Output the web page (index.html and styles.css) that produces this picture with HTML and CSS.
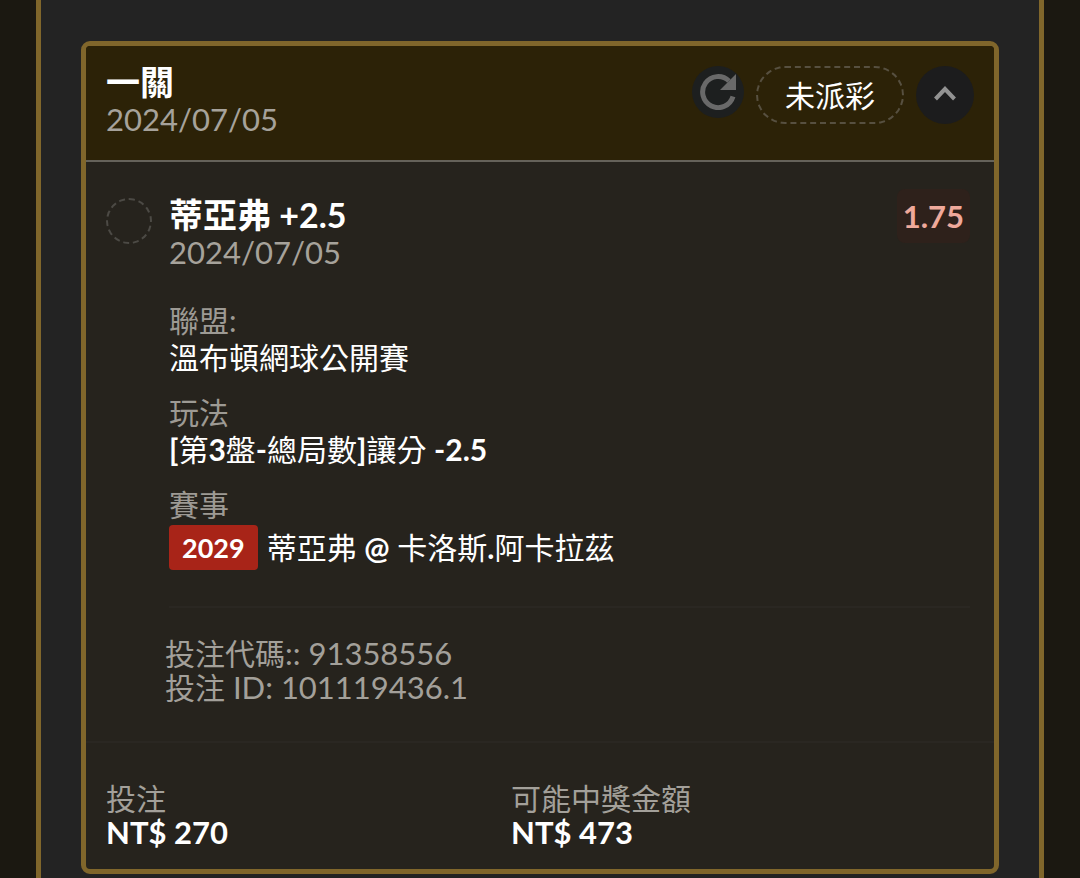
FILE: index.html
```html
<!DOCTYPE html>
<html lang="zh-Hant">
<head>
<meta charset="utf-8">
<meta name="viewport" content="width=device-width, initial-scale=1">
<title>一關</title>
<link rel="stylesheet" href="styles.css">
</head>
<body>
<main class="panel">
  <article class="card">
    <header class="card-head">
      <div class="card-heading">
        <h1 class="card-title">一關</h1>
        <time class="date" datetime="2024-07-05">2024/07/05</time>
      </div>
      <div class="actions">
        <button class="refresh" type="button" aria-label="重新整理">
          <svg class="refresh-icon" viewBox="0 0 36 36" aria-hidden="true">
            <path d="M33 22.500A15.500 15.500 0 1 1 29 7" fill="none" stroke="#696969" stroke-width="5"/>
            <path d="M36 0V16H20Z" fill="#696969"/>
          </svg>
        </button>
        <span class="status">未派彩</span>
        <button class="toggle" type="button" aria-label="收合">
          <svg class="toggle-icon" viewBox="0 0 22 15" aria-hidden="true">
            <path d="M1.5 13L11 3L20.5 13" fill="none" stroke="#929292" stroke-width="4"/>
          </svg>
        </button>
      </div>
    </header>

    <section class="bet">
      <span class="marker"></span>
      <div class="bet-body">
        <div class="bet-top">
          <div class="bet-heading">
            <h2 class="bet-title">蒂亞弗 +2.5</h2>
            <time class="date" datetime="2024-07-05">2024/07/05</time>
          </div>
          <strong class="odds">1.75</strong>
        </div>
        <dl class="details">
          <div>
            <dt>聯盟:</dt>
            <dd>溫布頓網球公開賽</dd>
          </div>
          <div>
            <dt>玩法</dt>
            <dd><b>[</b>第<b>3</b>盤<b>-</b>總局數<b>]</b>讓分 <b>-2.5</b></dd>
          </div>
          <div>
            <dt>賽事</dt>
            <dd class="match"><span class="badge">2029</span><span>蒂亞弗 <b>@</b> 卡洛斯<b>.</b>阿卡拉茲</span></dd>
          </div>
        </dl>
        <div class="codes">
          <p>投注代碼<span class="num">:: 91358556</span></p>
          <p>投注<span class="num"> ID: 101119436.1</span></p>
        </div>
      </div>
    </section>

    <footer class="totals">
      <div>
        <p>投注</p>
        <strong class="amount">NT$ 270</strong>
      </div>
      <div>
        <p>可能中獎金額</p>
        <strong class="amount">NT$ 473</strong>
      </div>
    </footer>
  </article>
</main>
</body>
</html>
```
FILE: styles.css
```css
* {
  box-sizing: border-box;
}

body,
h1,
h2,
p,
dl,
dd {
  margin: 0;
}

body {
  background: #1b1811;
  color: #fff;
  font: 30px/34px Lato, "Noto Sans CJK TC", sans-serif;
}

.panel {
  min-height: 100vh;
  margin: 0 36px;
  padding: 41px 40px 3px;
  border: solid #80662b;
  border-width: 0 5px;
  background: #232323;
}

.card {
  overflow: hidden;
  border: 5px solid #80662b;
  border-radius: 9px;
  background: #26231d;
}

.card-head {
  display: flex;
  justify-content: space-between;
  align-items: flex-start;
  padding: 17px 20px 23px;
  border-bottom: 2px solid #65625a;
  background: #2c2207;
}

.card-title,
.bet-title {
  font-size: 34px;
  font-weight: 700;
  line-height: 38px;
}

.date {
  display: block;
  font-size: 31px;
  line-height: 36px;
  color: #a6a29b;
}

.actions {
  display: flex;
  gap: 12px;
  padding-top: 3px;
}

.refresh,
.toggle {
  display: grid;
  place-items: center;
  padding: 0;
  border: 0;
  border-radius: 50%;
}

.refresh {
  width: 52px;
  height: 52px;
  background: #1d1f1f;
}

.refresh-icon {
  width: 36px;
  height: 36px;
}

.toggle {
  width: 58px;
  height: 58px;
  padding-bottom: 3px;
  background: #1c1c1d;
}

.toggle-icon {
  width: 22px;
  height: 15px;
}

.status {
  padding: 10px 27px;
  border: 2px dashed #575040;
  border-radius: 29px;
}

.bet {
  display: flex;
  gap: 17px;
  padding: 27px 24px 37px 20px;
  border-bottom: 2px solid #2a2722;
}

.marker {
  flex: none;
  width: 46px;
  height: 46px;
  margin-top: 9px;
  border: 2px dashed #4c4a45;
  border-radius: 50%;
}

.bet-body {
  flex: 1;
}

.bet-top {
  display: flex;
  justify-content: space-between;
  align-items: flex-start;
}

.bet-heading {
  padding-top: 7px;
}

.odds {
  padding: 10px 6px;
  border-radius: 8px;
  background: #2e211b;
  color: #efa99b;
  font-size: 31px;
}

.details {
  display: grid;
  gap: 18px;
  margin-top: 32px;
  padding-bottom: 36px;
  border-bottom: 2px solid #2a2722;
  line-height: 37px;
}

dt {
  color: #9d9a94;
}

.match {
  display: flex;
  align-items: center;
  gap: 9px;
  padding-top: 2px;
}

.badge {
  padding: 4px 13px;
  border-radius: 4px;
  background: #a82418;
  font-size: 27px;
  font-weight: 700;
}

.codes {
  margin-left: -4px;
  padding-top: 28px;
  color: #a3a09a;
}

.num {
  font-size: 31px;
}

.totals {
  display: grid;
  grid-template-columns: 405px 1fr;
  padding: 38px 20px 20px;
}

.totals p {
  color: #a3a09a;
}

.amount {
  display: block;
  font-size: 31px;
}
```
